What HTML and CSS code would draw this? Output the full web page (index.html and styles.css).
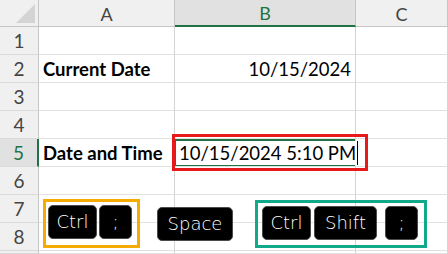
FILE: index.html
```html
<!DOCTYPE html>
<html lang="en">
<head>
  <meta charset="UTF-8">
  <meta name="viewport" content="width=device-width, initial-scale=1.0">
  <title>Insert current date and time</title>
  <link rel="stylesheet" href="styles.css">
</head>
<body>
  <div class="sheet">
    <div class="corner"></div>
    <div class="col-head">A</div>
    <div class="col-head active">B</div>
    <div class="col-head">C</div>

    <div class="row-head">1</div><div class="cell"></div><div class="cell"></div><div class="cell"></div>
    <div class="row-head">2</div><div class="cell bold">Current Date</div><div class="cell right">10/15/2024</div><div class="cell"></div>
    <div class="row-head">3</div><div class="cell"></div><div class="cell"></div><div class="cell"></div>
    <div class="row-head">4</div><div class="cell"></div><div class="cell"></div><div class="cell"></div>
    <div class="row-head active">5</div><div class="cell bold">Date and Time</div><div class="cell current"><span class="edit">10/15/2024 5:10 PM</span></div><div class="cell"></div>
    <div class="row-head">6</div><div class="cell"></div><div class="cell"></div><div class="cell"></div>
    <div class="row-head">7</div><div class="cell"></div><div class="cell"></div><div class="cell"></div>
    <div class="row-head">8</div><div class="cell"></div><div class="cell"></div><div class="cell"></div>
    <div class="row-head"></div><div class="cell"></div><div class="cell"></div><div class="cell"></div>

    <div class="highlight"></div>

    <div class="keys">
      <div class="group date">
        <span class="key ctrl">Ctrl</span>
        <span class="key semi">;</span>
      </div>
      <span class="key space">Space</span>
      <div class="group time">
        <span class="key ctrl">Ctrl</span>
        <span class="key shift">Shift</span>
        <span class="key semi">;</span>
      </div>
    </div>
  </div>
</body>
</html>
```

FILE: styles.css
```css
body {
  margin: 0;
  background: #ffffff;
  overflow: hidden;
}
.sheet {
  position: relative;
  display: grid;
  grid-template-columns: 39px 136px 181px 92px;
  grid-template-rows: 27px repeat(8, 28px) 3px;
  font-family: Lato, "Liberation Sans", sans-serif;
  font-size: 18.5px;
  color: #000;
}
.corner {
  background: #f0f0f0;
  border-right: 1px solid #c6c6c6;
  border-bottom: 1px solid #c6c6c6;
  box-sizing: border-box;
  position: relative;
}
.corner::after {
  content: "";
  position: absolute;
  right: 3px;
  bottom: 3px;
  width: 19px;
  height: 19px;
  background: #d4d4d4;
  clip-path: polygon(100% 0, 100% 100%, 0 100%);
}
.col-head {
  background: #f0f0f0;
  border-right: 1px solid #c6c6c6;
  border-bottom: 1px solid #c6c6c6;
  box-sizing: border-box;
  display: flex;
  align-items: center;
  justify-content: center;
  color: #444;
  font-size: 18px;
  padding-top: 1px;
}
.col-head.active {
  background: #e1e1e1;
  color: #217346;
  border-bottom: 2px solid #217346;
}
.row-head {
  background: #f0f0f0;
  border-right: 1px solid #c6c6c6;
  border-bottom: 1px solid #dadada;
  box-sizing: border-box;
  display: flex;
  align-items: center;
  justify-content: center;
  color: #444;
  font-size: 19px;
}
.row-head.active {
  background: #e1e1e1;
  color: #217346;
  border-right: 2px solid #217346;
}
.cell {
  border-right: 1px solid #d4d4d4;
  border-bottom: 1px solid #e1e1e1;
  box-sizing: border-box;
  display: flex;
  align-items: center;
  padding: 0 4px;
  white-space: nowrap;
}
.cell.bold {
  font-weight: bold;
}
.cell.right {
  justify-content: flex-end;
}
.cell.current {
  position: relative;
  overflow: visible;
  padding: 0 0 0 1px;
  box-shadow: inset 0 0 0 2px #217346;
  z-index: 1;
}
.edit {
  background: #fff;
  padding: 2px 1px 2px 3px;
  border-right: 1px solid #000;
  line-height: 20px;
}
.highlight {
  position: absolute;
  left: 172px;
  top: 134px;
  width: 196px;
  height: 37px;
  border: 3px solid #e8191b;
  box-sizing: border-box;
  z-index: 2;
}
.keys {
  position: absolute;
  left: 43px;
  top: 199px;
  display: flex;
  align-items: center;
  z-index: 2;
}
.group {
  display: flex;
  gap: 2px;
  box-sizing: border-box;
  height: 49px;
  border: 3px solid #f5ab00;
  padding: 3px 5px 6px 2px;
}
.group.time {
  height: 48px;
  border-color: #12a98b;
  margin-left: 22px;
  padding: 3px 6px 5px 4px;
  gap: 3px;
}
.key {
  display: flex;
  align-items: center;
  justify-content: center;
  height: 34px;
  box-sizing: border-box;
  background: #000;
  border: 1px solid #4a4a4a;
  border-radius: 5px;
  color: #fff;
  font-family: "DejaVu Sans ExtraLight", "DejaVu Sans", sans-serif;
  font-weight: 200;
  font-size: 18px;
  padding-bottom: 1px;
}
.key.ctrl {
  width: 49px;
}
.key.semi {
  width: 33px;
}
.key.shift {
  width: 63px;
  margin-right: 5px;
}
.key.space {
  width: 76px;
  margin-left: 17px;
}
```
